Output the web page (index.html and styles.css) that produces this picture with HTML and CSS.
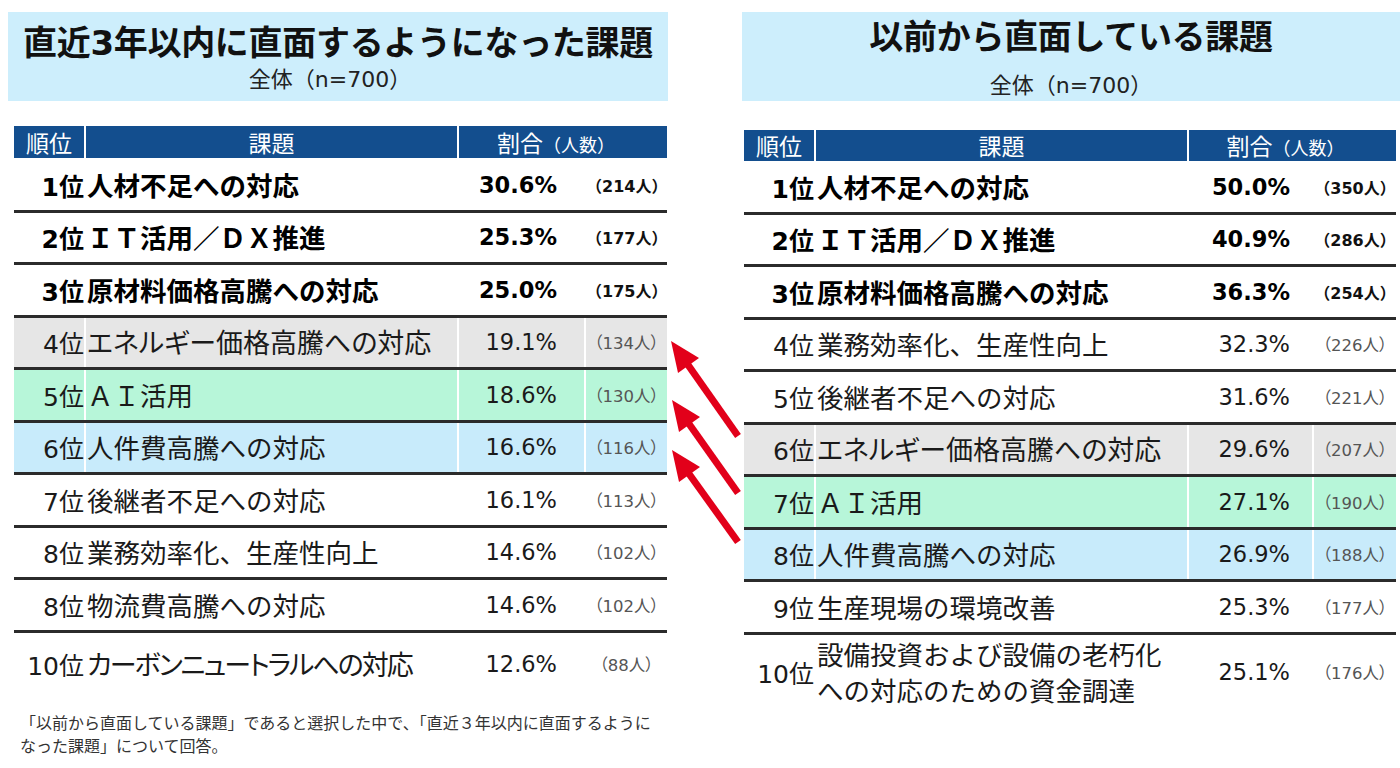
FILE: index.html
```html
<!DOCTYPE html>
<html lang="ja">
<head>
<meta charset="utf-8">
<title>課題ランキング</title>
<link rel="stylesheet" href="styles.css">
</head>
<body>
<div class="page">
  <section class="panel panel-left">
    <div class="title-box">
      <h1 class="title">直近3年以内に直面するようになった課題</h1>
      <div class="subtitle">全体（n=700）</div>
    </div>
    <div class="table">
      <div class="thead">
        <div class="th">順位</div>
        <div class="th">課題</div>
        <div class="th th-ratio">割合<span class="th-small">（人数）</span></div>
      </div>
      <div class="row strong"><div class="rank">1位</div><div class="issue">人材不足への対応</div><div class="pct">30.6%</div><div class="cnt">（214人）</div></div>
      <div class="row strong"><div class="rank">2位</div><div class="issue">ＩＴ活用／ＤＸ推進</div><div class="pct">25.3%</div><div class="cnt">（177人）</div></div>
      <div class="row strong"><div class="rank">3位</div><div class="issue">原材料価格高騰への対応</div><div class="pct">25.0%</div><div class="cnt">（175人）</div></div>
      <div class="row gray"><div class="rank">4位</div><div class="issue kana">エネルギー価格高騰への対応</div><div class="pct">19.1%</div><div class="cnt">（134人）</div></div>
      <div class="row green"><div class="rank">5位</div><div class="issue">ＡＩ活用</div><div class="pct">18.6%</div><div class="cnt">（130人）</div></div>
      <div class="row blue"><div class="rank">6位</div><div class="issue">人件費高騰への対応</div><div class="pct">16.6%</div><div class="cnt">（116人）</div></div>
      <div class="row"><div class="rank">7位</div><div class="issue">後継者不足への対応</div><div class="pct">16.1%</div><div class="cnt">（113人）</div></div>
      <div class="row"><div class="rank">8位</div><div class="issue">業務効率化、生産性向上</div><div class="pct">14.6%</div><div class="cnt">（102人）</div></div>
      <div class="row"><div class="rank">8位</div><div class="issue">物流費高騰への対応</div><div class="pct">14.6%</div><div class="cnt">（102人）</div></div>
      <div class="row last"><div class="rank">10位</div><div class="issue kana tight">カーボンニュートラルへの対応</div><div class="pct">12.6%</div><div class="cnt">（88人）</div></div>
    </div>
    <p class="note">「以前から直面している課題」であると選択した中で、「直近３年以内に直面するように<br>なった課題」について回答。</p>
  </section>

  <section class="panel panel-right">
    <div class="title-box">
      <h1 class="title">以前から直面している課題</h1>
      <div class="subtitle">全体（n=700）</div>
    </div>
    <div class="table">
      <div class="thead">
        <div class="th">順位</div>
        <div class="th">課題</div>
        <div class="th th-ratio">割合<span class="th-small">（人数）</span></div>
      </div>
      <div class="row strong"><div class="rank">1位</div><div class="issue">人材不足への対応</div><div class="pct">50.0%</div><div class="cnt">（350人）</div></div>
      <div class="row strong"><div class="rank">2位</div><div class="issue">ＩＴ活用／ＤＸ推進</div><div class="pct">40.9%</div><div class="cnt">（286人）</div></div>
      <div class="row strong"><div class="rank">3位</div><div class="issue">原材料価格高騰への対応</div><div class="pct">36.3%</div><div class="cnt">（254人）</div></div>
      <div class="row"><div class="rank">4位</div><div class="issue">業務効率化、生産性向上</div><div class="pct">32.3%</div><div class="cnt">（226人）</div></div>
      <div class="row"><div class="rank">5位</div><div class="issue">後継者不足への対応</div><div class="pct">31.6%</div><div class="cnt">（221人）</div></div>
      <div class="row gray"><div class="rank">6位</div><div class="issue kana">エネルギー価格高騰への対応</div><div class="pct">29.6%</div><div class="cnt">（207人）</div></div>
      <div class="row green"><div class="rank">7位</div><div class="issue">ＡＩ活用</div><div class="pct">27.1%</div><div class="cnt">（190人）</div></div>
      <div class="row blue"><div class="rank">8位</div><div class="issue">人件費高騰への対応</div><div class="pct">26.9%</div><div class="cnt">（188人）</div></div>
      <div class="row"><div class="rank">9位</div><div class="issue">生産現場の環境改善</div><div class="pct">25.3%</div><div class="cnt">（177人）</div></div>
      <div class="row last tall"><div class="rank">10位</div><div class="issue multi">設備投資および設備の老朽化<br>への対応のための資金調達</div><div class="pct">25.1%</div><div class="cnt">（176人）</div></div>
    </div>
  </section>

  <svg class="arrows" width="1400" height="768" viewBox="0 0 1400 768" aria-hidden="true">
    <g stroke="#e2001a" stroke-width="7" stroke-linecap="butt" fill="#e2001a">
      <line x1="738" y1="436" x2="686" y2="362"/>
      <polygon stroke="none" points="671,341 699,358 678,373"/>
      <line x1="738" y1="493" x2="687" y2="421"/>
      <polygon stroke="none" points="672,400 700,417 679,432"/>
      <line x1="738" y1="542" x2="687" y2="471"/>
      <polygon stroke="none" points="672,450 700,467 679,482"/>
    </g>
  </svg>
</div>
</body>
</html>
```

FILE: styles.css
```css
html, body {
  margin: 0;
  padding: 0;
  background: #ffffff;
}

.page {
  position: relative;
  width: 1400px;
  height: 768px;
  box-sizing: border-box;
  padding: 12px 0 0 8px;
  display: flex;
  gap: 74px;
  font-family: "DejaVu Sans", "Noto Sans CJK JP", sans-serif;
  color: #1a1a1a;
  overflow: hidden;
}

.panel {
  display: flex;
  flex-direction: column;
}

.panel-left {
  width: 660px;
}

.panel-right {
  width: 658px;
}

/* title box */
.title-box {
  background: #cdeefc;
  height: 89px;
  box-sizing: border-box;
  text-align: center;
}

.title {
  margin: 0;
  font-family: "DejaVu Sans", "Noto Sans CJK JP", sans-serif;
  font-weight: 700;
  font-size: 34px;
  line-height: 40px;
  color: #111;
  letter-spacing: -0.3px;
}

.subtitle {
  font-family: "DejaVu Sans", "Noto Sans CJK JP", sans-serif;
  font-size: 22px;
  line-height: 28px;
  color: #222;
}

.panel-left .title-box {
  padding-top: 11px;
}

.panel-left .subtitle {
  margin-top: 3px;
  padding-right: 16px;
}

.panel-right .title-box {
  padding-top: 5px;
}

.panel-right .subtitle {
  margin-top: 15px;
}

/* table */
.table {
  display: flex;
  flex-direction: column;
}

.panel-left .table {
  margin: 25px 0 0 6px;
  width: 653px;
}

.panel-right .table {
  margin: 29px 0 0 2px;
  width: 652px;
}

.thead {
  display: grid;
  background: #134e8e;
  color: #ffffff;
  height: 32px;
  margin-bottom: 2px;
  font-family: "Noto Sans CJK JP", sans-serif;
  font-size: 23px;
  line-height: 32px;
}

.panel-right .thead {
  height: 31px;
  line-height: 31px;
  margin-bottom: 1px;
}

.th {
  text-align: center;
}

.th + .th {
  border-left: 2px solid #ffffff;
}

.th-ratio {
  grid-column: span 2;
  padding-right: 14px;
}

.th-small {
  font-size: 18px;
}

.panel-left .thead,
.panel-left .row {
  grid-template-columns: 70px 373px 127px 83px;
}

.panel-right .thead,
.panel-right .row {
  grid-template-columns: 70px 373px 125px 84px;
}

.row {
  display: grid;
  align-items: stretch;
  height: 52.5px;
  box-sizing: border-box;
  border-bottom: 3px solid #2b2b2b;
  font-size: 26px;
}

.row.last {
  border-bottom: none;
  height: 62px;
}

.row.tall {
  height: 74px;
}

.row > div {
  display: flex;
  align-items: center;
}

.row > div + div {
  border-left: 2px solid #ffffff;
}

.rank {
  justify-content: flex-end;
  white-space: nowrap;
  font-size: 25px;
}

.issue {
  padding-left: 1px;
  white-space: nowrap;
  line-height: 34px;
  font-family: "Noto Sans CJK JP", sans-serif;
  font-size: 26.5px;
}

.issue.kana {
  font-feature-settings: "palt";
  font-size: 27px;
}

.issue.tight {
  letter-spacing: -2px;
}

.issue.multi {
  line-height: 36px;
}

.pct {
  justify-content: flex-end;
  font-size: 22.5px;
}

.panel-left .pct {
  padding-right: 27px;
}

.panel-right .pct {
  padding-right: 22px;
}

.cnt {
  justify-content: center;
  font-size: 16.5px;
  color: #555;
  font-feature-settings: "palt";
}

.row.strong {
  font-weight: 700;
  color: #000;
}

.row.strong .cnt {
  color: #111;
  font-feature-settings: normal;
  font-size: 16px;
}

.row.gray {
  background: #e6e6e6;
}

.row.green {
  background: #b7f6d9;
}

.row.blue {
  background: #c8ebfb;
}

/* note */
.note {
  margin: 16px 0 0 12px;
  font-family: "Noto Sans CJK JP", sans-serif;
  font-size: 16px;
  line-height: 23px;
  color: #333;
}

/* arrows overlay */
.arrows {
  position: absolute;
  left: 0;
  top: 0;
  pointer-events: none;
}
```
